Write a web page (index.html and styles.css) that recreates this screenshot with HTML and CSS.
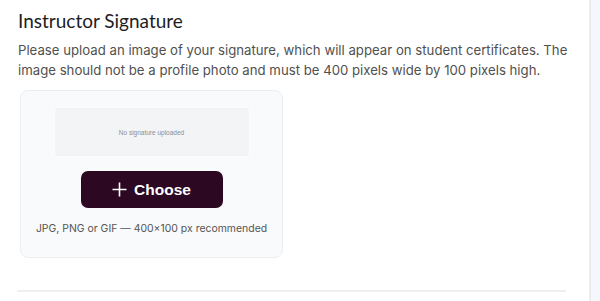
FILE: index.html
```html
<!DOCTYPE html>
<html>
<head>
<meta charset="utf-8">
<link rel="stylesheet" href="styles.css">
</head>
<body>
<div class="layout">
  <main class="main">
    <h2 class="title">Instructor Signature</h2>
    <p class="desc">Please upload an image of your signature, which will appear on student certificates. The image should not be a profile photo and must be 400 pixels wide by 100 pixels high.</p>
    <div class="card">
      <div class="preview"><span>No signature uploaded</span></div>
      <button class="choose" type="button">
        <svg width="15" height="15" viewBox="0 0 15 15" aria-hidden="true"><path d="M7.5 0.5v14M0.5 7.5h14" stroke="#fff" stroke-width="1.6" fill="none"/></svg>
        <span>Choose</span>
      </button>
      <div class="hint">JPG, PNG or GIF — 400×100 px recommended</div>
    </div>
    <div class="rule"></div>
  </main>
  <aside class="side"></aside>
</div>
</body>
</html>
```
FILE: styles.css
```css
* { box-sizing: border-box; }
html, body { margin: 0; padding: 0; background: #fff; }
body { font-family: "Inter", "Lato", sans-serif; color: #1f1f1f; }
.layout { display: flex; height: 301px; }
.main { flex: 1; padding: 9px 16px 0 18px; }
.side { width: 11px; border-left: 2px solid #ececec; background: #f4f7fb; }
.title { margin: 0; font-family: "Lato", sans-serif; font-size: 19px; font-weight: 400; line-height: 24px; color: #1d1d1f; }
.desc { margin: 7px 0 0; font-size: 13.2px; line-height: 20px; color: #505050; }
.card {
  margin-top: 10px; margin-left: 2px; width: 263px; height: 168px;
  background: #f9fafb; border: 1px solid #eceef1; border-radius: 8px;
  display: flex; flex-direction: column; align-items: center; padding-top: 15px;
}
.preview {
  width: 198px; height: 52px; background: #f3f4f6; border: 2px solid #fbfbfc;
  border-radius: 5px; display: flex; align-items: center; justify-content: center;
}
.preview span { font-family: "Liberation Sans", Arial, sans-serif; font-size: 6.5px; color: #8a8f98; }
.choose {
  margin-top: 13px; width: 142px; height: 37px; border: 0; border-radius: 7px;
  background: #2c0822; color: #fff; display: flex; align-items: center; justify-content: center; gap: 7px;
  font-family: "Liberation Sans", Arial, sans-serif; font-weight: 700; font-size: 15.5px; padding: 0;
}
.hint { margin-top: 14px; font-size: 10.45px; color: #555; }
.rule { margin: 32px 7px 0 -1px; height: 2px; background: #efefef; }
```
